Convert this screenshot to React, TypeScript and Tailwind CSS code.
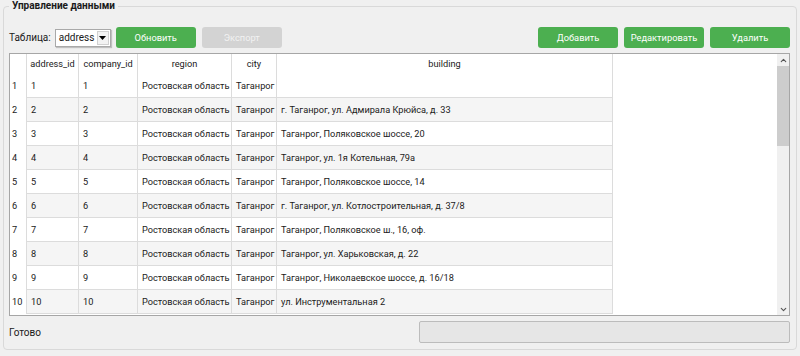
import React from 'react';
import { ChevronUp, ChevronDown } from 'lucide-react';

const rows = [
  ['1', '1', 'Ростовская область', 'Таганрог', ''],
  ['2', '2', 'Ростовская область', 'Таганрог', 'г. Таганрог, ул. Адмирала Крюйса, д. 33'],
  ['3', '3', 'Ростовская область', 'Таганрог', 'Таганрог, Поляковское шоссе, 20'],
  ['4', '4', 'Ростовская область', 'Таганрог', 'Таганрог, ул. 1я Котельная, 79а'],
  ['5', '5', 'Ростовская область', 'Таганрог', 'Таганрог, Поляковское шоссе, 14'],
  ['6', '6', 'Ростовская область', 'Таганрог', 'г. Таганрог, ул. Котлостроительная, д. 37/8'],
  ['7', '7', 'Ростовская область', 'Таганрог', 'Таганрог, Поляковское ш., 16, оф.'],
  ['8', '8', 'Ростовская область', 'Таганрог', 'Таганрог, ул. Харьковская, д. 22'],
  ['9', '9', 'Ростовская область', 'Таганрог', 'Таганрог, Николаевское шоссе, д. 16/18'],
  ['10', '10', 'Ростовская область', 'Таганрог', 'ул. Инструментальная 2'],
];

const headers = ['address_id', 'company_id', 'region', 'city', 'building'];
const widths = ['w-[52px]', 'w-[59px]', 'w-[94px]', 'w-[45px]', 'w-[336px]'];

function GreenButton({ children }: { children: React.ReactNode }) {
  return (
    <button className="w-[80px] h-[21px] rounded-[3px] bg-[#4caf50] text-white text-[9.3px] flex items-center justify-center">
      {children}
    </button>
  );
}

export default function App() {
  return (
    <div
      className="w-[800px] h-[356px] bg-[#f0f0f0] text-[#1a1a1a] text-[10px] overflow-hidden"
      style={{ fontFamily: 'Roboto, "Noto Sans", sans-serif' }}
    >
      <fieldset className="mx-[3px] h-[350px] border border-[#d9d9d9] rounded-[4px] pl-[5px] pr-[6px]">
        <legend className="px-[3px] font-bold text-[10px] leading-[12px]">Управление данными</legend>

        {/* toolbar */}
        <div className="mt-[15px] h-[21px] flex items-center">
          <span className="mr-[4px]">Таблица:</span>
          <div className="w-[56px] h-[18px] bg-white border border-[#a9a9a9] flex items-center shadow-[1px_1px_1px_rgba(0,0,0,0.2)]">
            <span className="flex-1 pl-[3px] leading-none">address</span>
            <div className="w-[12px] h-[14px] mr-[1px] bg-[#f2f2f2] border border-[#d0d0d0] flex items-center justify-center">
              <svg width="7" height="4" viewBox="0 0 7 4">
                <path d="M0 0H7L3.5 4Z" fill="#000" />
              </svg>
            </div>
          </div>
          <div className="ml-[5px]">
            <GreenButton>Обновить</GreenButton>
          </div>
          <button className="ml-[6px] w-[80px] h-[21px] rounded-[3px] bg-[#d3d3d3] text-[#f2f2f2] text-[9.3px]">
            Экспорт
          </button>
          <div className="ml-auto flex gap-[6px]">
            <GreenButton>Добавить</GreenButton>
            <GreenButton>Редактировать</GreenButton>
            <GreenButton>Удалить</GreenButton>
          </div>
        </div>

        {/* table */}
        <div className="mt-[5px] h-[263px] border border-[#a6a6a6] bg-white flex text-[9.2px]">
          <div className="flex-1 flex flex-col">
            <div className="h-[20px] flex">
              <div className="w-[17px] border-r border-[#dcdcdc]" />
              {headers.map((h, i) => (
                <div key={h} className={`${widths[i]} border-r border-[#dcdcdc] flex items-center justify-center`}>
                  {h}
                </div>
              ))}
            </div>
            {rows.map((r, idx) => (
              <div key={idx} className="h-[24px] flex">
                <div className="w-[17px] border-r border-[#dcdcdc] flex items-center pl-[2px]">{r[0]}</div>
                {r.map((c, i) => (
                  <div
                    key={i}
                    className={`${widths[i]} border-r border-b border-[#dcdcdc] flex items-center pl-[4px] whitespace-nowrap overflow-hidden ${idx % 2 === 1 ? 'bg-[#f5f5f5]' : 'bg-white'}`}
                  >
                    {c}
                  </div>
                ))}
              </div>
            ))}
          </div>
          {/* scrollbar */}
          <div className="w-[12px] bg-[#f0f0f0] flex flex-col items-center">
            <div className="h-[12px] flex items-center justify-center">
              <ChevronUp size={9} strokeWidth={3} color="#555" />
            </div>
            <div className="w-[12px] h-[80px] bg-[#cdcdcd]" />
            <div className="flex-1" />
            <div className="h-[12px] flex items-center justify-center">
              <ChevronDown size={9} strokeWidth={3} color="#555" />
            </div>
          </div>
        </div>

        {/* status */}
        <div className="mt-[5px] h-[22px] flex items-center">
          <span className="flex-1">Готово</span>
          <div className="w-[371px] h-[22px] rounded-[2px] border border-[#bcbcbc] bg-[#e6e6e6]" />
        </div>
      </fieldset>
    </div>
  );
}
